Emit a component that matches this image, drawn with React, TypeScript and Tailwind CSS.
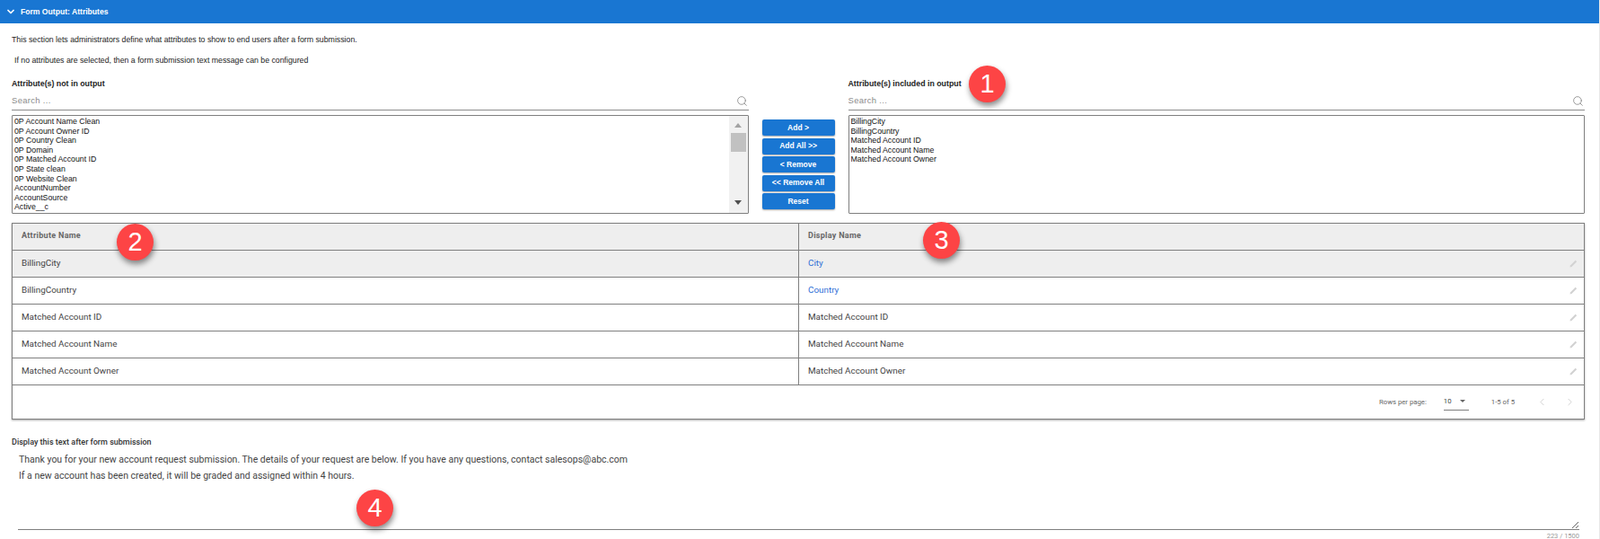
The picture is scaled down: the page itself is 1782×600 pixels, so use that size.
import React from 'react';
import { ChevronDown, ChevronLeft, ChevronRight, Search } from 'lucide-react';

const NOT_IN_OUTPUT = [
  '0P Account Name Clean',
  '0P Account Owner ID',
  '0P Country Clean',
  '0P Domain',
  '0P Matched Account ID',
  '0P State clean',
  '0P Website Clean',
  'AccountNumber',
  'AccountSource',
  'Active__c',
  'Account ID',
];

const IN_OUTPUT = ['BillingCity', 'BillingCountry', 'Matched Account ID', 'Matched Account Name', 'Matched Account Owner'];

const ROWS = [
  { name: 'BillingCity', display: 'City', link: true, active: true },
  { name: 'BillingCountry', display: 'Country', link: true, active: false },
  { name: 'Matched Account ID', display: 'Matched Account ID', link: false, active: false },
  { name: 'Matched Account Name', display: 'Matched Account Name', link: false, active: false },
  { name: 'Matched Account Owner', display: 'Matched Account Owner', link: false, active: false },
];

const BUTTONS = ['Add >', 'Add All >>', '< Remove', '<< Remove All', 'Reset'];

const Badge: React.FC<{ n: number; className: string }> = ({ n, className }) => (
  <div
    className={`absolute w-[41px] h-[41px] rounded-full bg-[#fd4445] text-white flex items-center justify-center text-[29px] leading-none font-['Liberation_Sans',sans-serif] shadow-[1px_4px_6px_rgba(0,0,0,0.45)] ${className}`}
  >
    {n}
  </div>
);

const SearchBox: React.FC = () => (
  <div className="flex items-center h-[22px] pt-[1px] border-b border-[#8c8c8c]">
    <input
      placeholder="Search ..."
      className="flex-1 min-w-0 outline-none text-[9.5px] tracking-[0.3px] font-['Liberation_Sans',sans-serif] placeholder:text-[#8a8a8a]"
    />
    <Search size={13} strokeWidth={1.4} className="text-[#7d7d7d] mr-[1px]" />
  </div>
);

const PencilIcon: React.FC = () => (
  <svg width="9" height="9" viewBox="0 0 10 10" className="text-[#d2d2d2]">
    <path d="M0.5 9.5 L1 7.3 L7.4 0.9 L9.1 2.6 L2.7 9 Z" fill="currentColor" />
  </svg>
);

const App: React.FC = () => {
  return (
    <div className="relative w-[1782px] h-[600px] overflow-hidden bg-white border-r border-[#e8e8e8] font-['Liberation_Sans',sans-serif] text-[#222]">
      <div className="h-[26px] bg-[#1976d2] text-white flex items-center pl-[6px] text-[8.6px] font-bold">
        <ChevronDown size={12} strokeWidth={3.5} />
        <span className="ml-[5px]">Form Output: Attributes</span>
      </div>

      <div className="pl-[13px] pr-[16px]">
        <p className="mt-[12px] h-[12px] leading-[12px] text-[8.75px]">
          This section lets administrators define what attributes to show to end users after a form submission.
        </p>
        <p className="mt-[11px] h-[12px] leading-[12px] text-[8.75px] pl-[3px]">
          If no attributes are selected, then a form submission text message can be configured
        </p>

        <div className="flex gap-[15px] mt-[12px]">
          <div className="flex-1 min-w-0">
            <div className="h-[16px] leading-[16px] text-[8.8px] font-bold">Attribute(s) not in output</div>
            <SearchBox />
            <div className="flex mt-[5px] h-[110px] border border-[#7f7f7f] rounded-[1px] overflow-hidden">
              <div className="flex-1 pl-[2px] pt-[1px] text-[8.75px] leading-[10.6px] text-[#111]">
                {NOT_IN_OUTPUT.map((item) => (
                  <div key={item} className="h-[10.6px] whitespace-nowrap">{item}</div>
                ))}
              </div>
              <div className="w-[21px] bg-[#f1f1f1] flex flex-col items-center">
                <div className="mt-[8px] w-0 h-0 border-l-[4px] border-r-[4px] border-b-[5px] border-l-transparent border-r-transparent border-b-[#a3a3a3]" />
                <div className="mt-[6px] w-[17px] h-[21px] bg-[#c1c1c1]" />
                <div className="mt-auto mb-[9px] w-0 h-0 border-l-[4px] border-r-[4px] border-t-[5px] border-l-transparent border-r-transparent border-t-[#505050]" />
              </div>
            </div>
          </div>

          <div className="w-[81px] pt-[48px] flex flex-col gap-[2.5px]">
            {BUTTONS.map((label) => (
              <button
                key={label}
                className="h-[18px] rounded-[2px] bg-[#1976d2] text-white text-[8.5px] font-bold shadow-[0_1px_2px_rgba(0,0,0,0.35)]"
              >
                {label}
              </button>
            ))}
          </div>

          <div className="flex-1 min-w-0">
            <div className="h-[16px] leading-[16px] text-[8.8px] font-bold">Attribute(s) included in output</div>
            <SearchBox />
            <div className="mt-[5px] h-[110px] border border-[#7f7f7f] rounded-[1px] pl-[2px] pt-[1px] text-[8.75px] leading-[10.6px] text-[#111]">
              {IN_OUTPUT.map((item) => (
                <div key={item} className="h-[10.6px] whitespace-nowrap">{item}</div>
              ))}
            </div>
          </div>
        </div>

        <div className="mt-[10px] border border-[#7f7f7f] shadow-[0_1px_2px_rgba(0,0,0,0.35)] font-['Roboto',sans-serif]">
          <div className="flex h-[30px] bg-[#eeeeee] border-b border-[#7f7f7f] text-[9px] tracking-[0.3px] font-bold text-[#666]">
            <div className="w-[876px] pl-[10px] pb-[1px] flex items-center border-r border-[#7f7f7f]">Attribute Name</div>
            <div className="flex-1 pl-[10px] pb-[1px] flex items-center">Display Name</div>
          </div>
          {ROWS.map((row) => (
            <div
              key={row.name}
              className={`flex h-[30px] border-b border-[#7f7f7f] text-[9.9px] text-[#444] ${row.active ? 'bg-[#eeeeee]' : 'bg-white'}`}
            >
              <div className="w-[876px] pl-[10px] flex items-center border-r border-[#7f7f7f]">{row.name}</div>
              <div className="flex-1 pl-[10px] pr-[7px] flex items-center justify-between">
                <span className={row.link ? 'text-[#2f6fd6]' : ''}>{row.display}</span>
                <PencilIcon />
              </div>
            </div>
          ))}
          <div className="h-[37px] flex items-center justify-end text-[7.75px] text-[#666]">
            <span>Rows per page:</span>
            <div className="ml-[19px] w-[28px] h-[20px] mt-[-1px] border-b border-[#7f7f7f] flex items-center justify-between pr-[4px] text-[#444]">
              <span>10</span>
              <div className="w-0 h-0 border-l-[3.5px] border-r-[3.5px] border-t-[3.5px] border-l-transparent border-r-transparent border-t-[#666]" />
            </div>
            <span className="ml-[25px]">1-5 of 5</span>
            <ChevronLeft size={13} strokeWidth={1.3} className="ml-[24px] text-[#bdbdbd]" />
            <ChevronRight size={13} strokeWidth={1.3} className="ml-[18px] mr-[9px] text-[#bdbdbd]" />
          </div>
        </div>

        <div className="mt-[19px] h-[12px] leading-[12px] text-[9px] font-['Roboto',sans-serif] font-medium text-[#333]">
          Display this text after form submission
        </div>
        <div className="pl-[7px] pr-[6px]">
          <textarea
            readOnly
            defaultValue={'Thank you for your new account request submission. The details of your request are below. If you have any questions, contact salesops@abc.com\nIf a new account has been created, it will be graded and assigned within 4 hours.'}
            className="block w-full h-[87px] mt-[5px] outline-none border-b border-[#7f7f7f] resize-y text-[10.5px] leading-[18px] pl-[1px] text-[#444] font-['Roboto',sans-serif]"
          />
          <div className="text-right text-[7.5px] leading-[10px] mt-[2px] text-[#999] font-['Roboto',sans-serif]">223 / 1500</div>
        </div>
      </div>

      <Badge n={1} className="left-[1079px] top-[73px]" />
      <Badge n={2} className="left-[130px] top-[249px]" />
      <Badge n={3} className="left-[1028px] top-[247px]" />
      <Badge n={4} className="left-[397px] top-[545px]" />
    </div>
  );
};

export default App;
